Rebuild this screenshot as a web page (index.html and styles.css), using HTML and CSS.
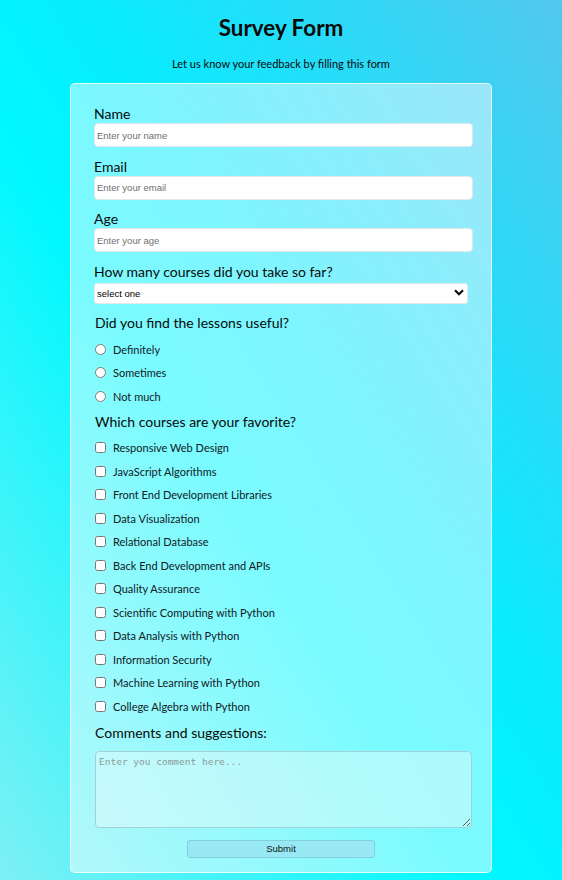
FILE: index.html
```html
<!DOCTYPE html>
<html lang="en">
<head>
<meta charset="utf-8">
<title>Survey Form</title>
<link rel="stylesheet" href="styles.css">
</head>
<body>
<header class="header">
  <h1 class="title">Survey Form</h1>
  <p class="subtitle">Let us know your feedback by filling this form</p>
</header>
<form class="card">
  <div class="field">
    <label class="label" for="name">Name</label>
    <input class="text-input" id="name" type="text" placeholder="Enter your name">
  </div>
  <div class="field">
    <label class="label" for="email">Email</label>
    <input class="text-input" id="email" type="email" placeholder="Enter your email">
  </div>
  <div class="field">
    <label class="label" for="age">Age</label>
    <input class="text-input" id="age" type="number" placeholder="Enter your age">
  </div>
  <div class="field">
    <label class="label" for="courses">How many courses did you take so far?</label>
    <div class="select-wrap">
      <select class="select" id="courses">
        <option>select one</option>
        <option>1</option>
        <option>2-5</option>
        <option>More than 5</option>
      </select>
      <svg class="chevron" width="10" height="7" viewBox="0 0 10 7"><path d="M1 1.2 L5 5.2 L9 1.2" fill="none" stroke="#111" stroke-width="2.2"/></svg>
    </div>
  </div>
  <div class="group">
    <p class="label question">Did you find the lessons useful?</p>
    <ul class="options">
      <li class="option"><input class="radio" type="radio" name="useful"><span>Definitely</span></li>
      <li class="option"><input class="radio" type="radio" name="useful"><span>Sometimes</span></li>
      <li class="option"><input class="radio" type="radio" name="useful"><span>Not much</span></li>
    </ul>
  </div>
  <div class="group">
    <p class="label question">Which courses are your favorite?</p>
    <ul class="options">
      <li class="option"><input class="check" type="checkbox"><span>Responsive Web Design</span></li>
      <li class="option"><input class="check" type="checkbox"><span>JavaScript Algorithms</span></li>
      <li class="option"><input class="check" type="checkbox"><span>Front End Development Libraries</span></li>
      <li class="option"><input class="check" type="checkbox"><span>Data Visualization</span></li>
      <li class="option"><input class="check" type="checkbox"><span>Relational Database</span></li>
      <li class="option"><input class="check" type="checkbox"><span>Back End Development and APIs</span></li>
      <li class="option"><input class="check" type="checkbox"><span>Quality Assurance</span></li>
      <li class="option"><input class="check" type="checkbox"><span>Scientific Computing with Python</span></li>
      <li class="option"><input class="check" type="checkbox"><span>Data Analysis with Python</span></li>
      <li class="option"><input class="check" type="checkbox"><span>Information Security</span></li>
      <li class="option"><input class="check" type="checkbox"><span>Machine Learning with Python</span></li>
      <li class="option"><input class="check" type="checkbox"><span>College Algebra with Python</span></li>
    </ul>
  </div>
  <div class="group">
    <label class="label question comments-label" for="comments">Comments and suggestions:</label>
    <textarea class="textarea" id="comments" placeholder="Enter you comment here..."></textarea>
  </div>
  <div class="actions">
    <button class="submit" type="submit">Submit</button>
  </div>
</form>
</body>
</html>
```
FILE: styles.css
```css
* { box-sizing: border-box; }

html, body { margin: 0; padding: 0; }

body {
  min-height: 880px;
  font-family: Lato, "Open Sans", sans-serif;
  color: #0a0a0a;
  background: linear-gradient(to bottom left, #52c6ee 0%, #08ecff 42%, #00f8ff 58%, #7ef0f4 100%);
}

.header {
  padding-top: 14px;
  text-align: center;
}

.title {
  margin: 0;
  font-size: 22.4px;
  line-height: 28px;
  font-weight: 700;
}

.subtitle {
  margin: 15px 0 0;
  font-size: 11px;
  line-height: 14px;
}

.card {
  width: 422px;
  margin: 12px auto 0;
  padding: 21px 18px 14px 23px;
  border: 1px solid rgba(255, 255, 255, 0.75);
  border-radius: 5px;
  background: rgba(255, 255, 255, 0.48);
  display: flex;
  flex-direction: column;
}

.field {
  display: flex;
  flex-direction: column;
  margin-bottom: 10.5px;
}

.label {
  display: block;
  margin: 0;
  font-size: 14px;
  line-height: 18px;
}

.text-input {
  width: 379px;
  height: 24px;
  margin: 0;
  padding: 0 2px;
  border: 1px solid #dfe8ea;
  border-radius: 4px;
  background: #fff;
  font-family: "Liberation Sans", Arial, sans-serif;
  font-size: 9.5px;
  color: #222;
  outline: none;
}

.text-input::placeholder { color: #6f6f6f; }

.select-wrap {
  position: relative;
  width: 374px;
}

.select {
  -webkit-appearance: none;
  appearance: none;
  width: 374px;
  height: 21px;
  margin: 0;
  padding: 0 2px;
  border: 1px solid #e4eaec;
  border-radius: 3px;
  background: #fff;
  font-family: "Liberation Sans", Arial, sans-serif;
  font-size: 9.5px;
  color: #000;
}

.chevron {
  position: absolute;
  right: 4px;
  top: 8px;
}

.group {
  display: flex;
  flex-direction: column;
}

.question { padding-left: 1px; }

.options {
  list-style: none;
  margin: 5.5px 0 4.5px;
  padding: 0;
}

.option {
  display: flex;
  align-items: center;
  height: 23.5px;
  padding-left: 1px;
  font-size: 11px;
  color: #10201f;
}

.radio, .check {
  width: 11px;
  height: 11px;
  margin: 0 7px 0 0;
  flex: none;
}

.comments-label { margin-bottom: 9px; margin-top: 1px; }

.textarea {
  display: block;
  width: 377px;
  height: 77px;
  margin: 0 0 0 1px;
  padding: 4px 3px;
  border: 1px solid #a3d2d6;
  border-radius: 4px;
  background: rgba(235, 250, 250, 0.45);
  font-family: "DejaVu Sans Mono", "Liberation Mono", monospace;
  font-size: 9.5px;
  color: #222;
  resize: both;
}

.textarea::placeholder { color: #8a9a9a; }

.actions {
  display: flex;
  justify-content: center;
  margin-top: 12px;
  padding-right: 5px;
}

.submit {
  width: 188px;
  height: 18px;
  padding: 0;
  border: 1px solid #84cfdc;
  border-radius: 3px;
  background: #98e9f5;
  font-family: "Liberation Sans", Arial, sans-serif;
  font-size: 9.5px;
  color: #111;
}
```
